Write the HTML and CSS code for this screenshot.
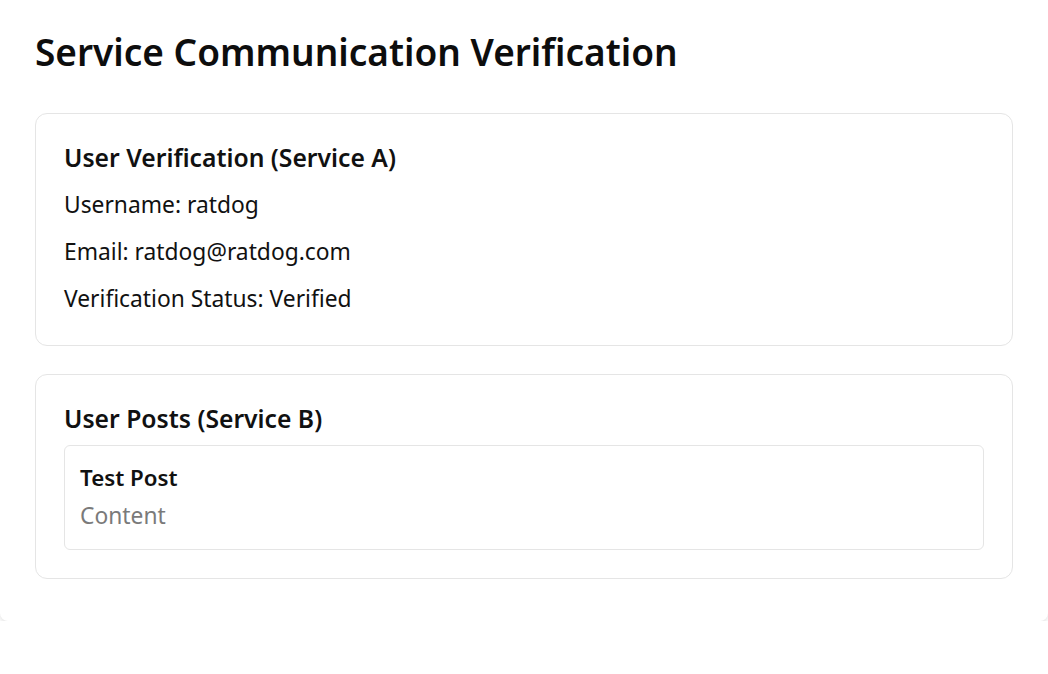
FILE: index.html
```html
<!DOCTYPE html>
<html lang="en">
<head>
<meta charset="utf-8">
<title>Service Communication Verification</title>
<link rel="stylesheet" href="styles.css">
</head>
<body>
<div class="container">
  <h1 class="title">Service Communication Verification</h1>
  <section class="card">
    <h2 class="card-title">User Verification (Service A)</h2>
    <p class="field first">Username: ratdog</p>
    <p class="field">Email: ratdog@ratdog.com</p>
    <p class="field last">Verification Status: Verified</p>
  </section>
  <section class="card">
    <h2 class="card-title">User Posts (Service B)</h2>
    <div class="post">
      <h3 class="post-title">Test Post</h3>
      <p class="post-content">Content</p>
    </div>
  </section>
</div>
</body>
</html>
```
FILE: styles.css
```css
html, body {
  margin: 0;
  padding: 0;
  background: #ffffff;
}

body {
  font-family: "Noto Sans", "Open Sans", sans-serif;
  color: #111111;
}

.container {
  background: #ffffff;
  padding: 28px 35px 42px;
  border-radius: 0 0 8px 8px;
  box-shadow: 0 2px 5px rgba(0, 0, 0, 0.12);
}

.title {
  margin: 0 0 37px;
  font-size: 37px;
  line-height: 48px;
  font-weight: 600;
  color: #0d0d0d;
}

.card {
  border: 1px solid #e5e5e5;
  border-radius: 12px;
  padding: 28px 28px 28px;
}

.card + .card {
  margin-top: 28px;
}

.card-title {
  margin: 0 0 10px;
  font-size: 24.7px;
  line-height: 32px;
  font-weight: 600;
}

.field {
  margin: 17px 0 0;
  font-size: 22.8px;
  line-height: 30px;
}

.field.first {
  margin-top: 16px;
}

.field.last {
  margin-bottom: 3px;
}

.post {
  border: 1px solid #e5e5e5;
  border-radius: 6px;
  padding: 14px 15px 14px;
}

.post-title {
  margin: 0;
  font-size: 22.3px;
  line-height: 36px;
  font-weight: 600;
}

.post-content {
  margin: 1px 0 0;
  font-size: 22.8px;
  line-height: 38px;
  color: #7a7a7a;
}
```
